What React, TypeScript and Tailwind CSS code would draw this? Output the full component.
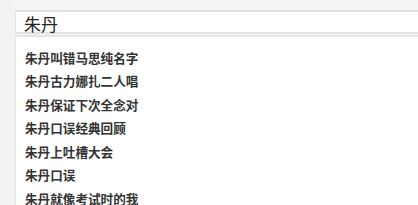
const items = [
  "朱丹叫错马思纯名字",
  "朱丹古力娜扎二人唱",
  "朱丹保证下次全念对",
  "朱丹口误经典回顾",
  "朱丹上吐槽大会",
  "朱丹口误",
  "朱丹就像考试时的我",
];

export default function App() {
  return (
    <div
      className="flex h-[205px] w-[418px] overflow-hidden bg-[#f4f4f4]"
      style={{ fontFamily: '"Noto Sans CJK SC", "Liberation Sans", sans-serif' }}
    >
      <div className="w-[15px] shrink-0 bg-[#f2f2f2]" />
      <div className="flex flex-1 flex-col pt-[10px]">
        <div className="flex h-[29px] items-center border-t-2 border-l border-b-2 border-[#e2e2e2] bg-white pt-[3px] pl-[8px] text-[17px] leading-none text-[#222]">
          朱丹
        </div>
        <div className="mt-[1px] flex-1 border-t-2 border-l border-[#e4e4e4] bg-white pt-[7px] pl-[9px]">
          {items.map((t) => (
            <div
              key={t}
              className="flex h-[23.6px] items-center pt-[4px] text-[12.6px] font-bold leading-none text-[#333]"
            >
              {t}
            </div>
          ))}
        </div>
      </div>
    </div>
  );
}
